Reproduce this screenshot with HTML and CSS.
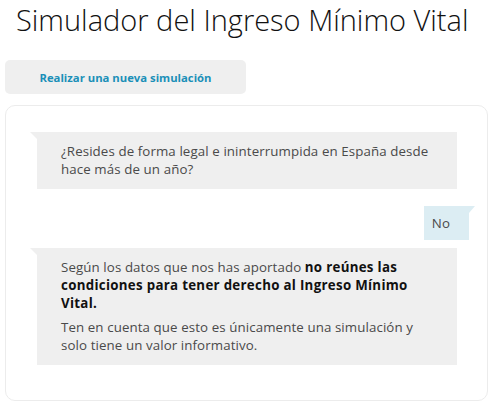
FILE: index.html
```html
<!DOCTYPE html>
<html lang="es">
<head>
    <meta charset="UTF-8">
    <meta name="viewport" content="width=device-width, initial-scale=1.0">
    <title>Simulador del Ingreso Mínimo Vital</title>
    <link rel="stylesheet" href="styles.css">
</head>
<body>
    <div class="page">
        <h1>Simulador del Ingreso Mínimo Vital</h1>

        <button class="restart">Realizar una nueva simulación</button>

        <div class="chat">
            <div class="bubble bot">
                <p>¿Resides de forma legal e ininterrumpida en España desde hace más de un año?</p>
            </div>
            <div class="bubble user">
                <p>No</p>
            </div>
            <div class="bubble bot">
                <p>Según los datos que nos has aportado <strong>no reúnes las condiciones para tener derecho al Ingreso Mínimo Vital.</strong></p>
                <p>Ten en cuenta que esto es únicamente una simulación y solo tiene un valor informativo.</p>
            </div>
        </div>
    </div>
</body>
</html>
```

FILE: styles.css
```css
body {
    margin: 0;
    font-family: "Open Sans", Arial, sans-serif;
    color: #4a4a4a;
    background: #fff;
}
.page {
    padding: 0 12px 0 5px;
}
h1 {
    font-family: "Open Sans", "Liberation Sans", sans-serif;
    font-weight: 300;
    font-size: 29px;
    color: #111;
    margin: 0 0 20px 0;
    padding-left: 11px;
    line-height: 40px;
    white-space: nowrap;
}
.restart {
    display: block;
    width: 241px;
    height: 34px;
    border: none;
    border-radius: 5px;
    background-color: #efefef;
    color: #1b8fb8;
    font-family: "Open Sans", Arial, sans-serif;
    font-weight: bold;
    font-size: 11.3px;
    cursor: pointer;
    margin-bottom: 11px;
}
.chat {
    display: flex;
    flex-direction: column;
    border: 1px solid #ececec;
    border-radius: 10px;
    padding: 26px 30px 35px 31px;
}
.bubble {
    position: relative;
    background-color: #efefef;
    padding: 10px 24px 11px 24px;
    font-size: 13.3px;
    line-height: 18px;
    letter-spacing: 0.1px;
}
.bubble p {
    margin: 0;
}
.bubble p + p {
    margin-top: 6px;
}
.bubble strong {
    color: #111;
    letter-spacing: 0.3px;
}
.bubble.bot::before {
    content: "";
    position: absolute;
    left: -7px;
    top: 0;
    border-top: 7px solid #efefef;
    border-left: 7px solid transparent;
}
.bubble.user {
    align-self: flex-end;
    margin: 17px -12px 8px 0;
    background-color: #dcedf3;
    padding: 8px 19px 8px 8px;
}
.bubble.user::after {
    content: "";
    position: absolute;
    right: -6px;
    top: 0;
    border-top: 7px solid #dcedf3;
    border-right: 6px solid transparent;
}
```
